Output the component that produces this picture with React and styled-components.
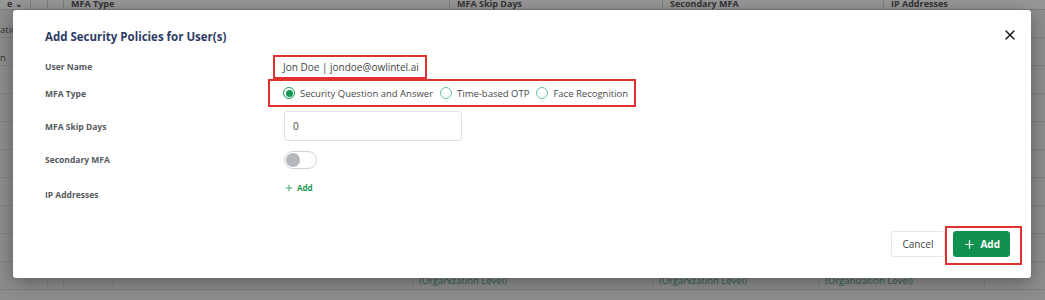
import React, { useState } from "react";
import styled, { createGlobalStyle } from "styled-components";
import { X, Plus } from "lucide-react";

const GlobalStyle = createGlobalStyle`
  body {
    margin: 0;
    font-family: "Open Sans", "Noto Sans", sans-serif;
    background: #8d8d8d;
  }
`;

// ---------- dimmed page behind the dialog ----------

const Page = styled.div`
  position: relative;
  width: 1045px;
  height: 300px;
  overflow: hidden;
  background: #8d8d8d;
`;

const TableHead = styled.div`
  display: grid;
  grid-template-columns: 30px 17px 16px 386px 213px 221px 1fr;
  height: 14px;
  margin-top: -5px;
  background: #979797;
  border-bottom: 1px solid #7c7c7c;
`;

const HeadCell = styled.div`
  font-size: 9px;
  font-weight: 700;
  color: #333;
  padding-left: 7px;
  line-height: 17px;
  white-space: nowrap;
  overflow: hidden;
  border-left: ${p => (p.$line ? "1px solid #7f7f7f" : "none")};
`;

const Body = styled.div`
  display: flex;
  flex-direction: column;
`;

const Row = styled.div`
  display: grid;
  grid-template-columns: 30px 17px 16px 50px 299px 240px 166px 166px 1fr;
  height: 27px;
  border-bottom: 1px solid #7f7f7f;
`;

const Cell = styled.div`
  border-left: ${p => (p.$line ? "1px solid #808080" : "none")};
  font-size: 9.5px;
  color: ${p => (p.$muted ? "#333" : "#2e5d48")};
  padding: ${p => (p.$muted ? "13px 0 0 0" : "12px 0 0 6px")};
  white-space: nowrap;
  overflow: hidden;
`;

// ---------- dialog ----------

const Dialog = styled.div`
  position: absolute;
  top: 10px;
  left: 13px;
  width: 1018px;
  height: 268px;
  background: #fff;
  border-radius: 3px;
  box-shadow: 0 4px 18px rgba(0, 0, 0, 0.35);
  display: flex;
  flex-direction: column;
  box-sizing: border-box;
  padding: 0 9px 13px 32px;
`;

const Header = styled.div`
  display: flex;
  align-items: flex-start;
  justify-content: space-between;
  height: 44px;
  box-sizing: border-box;
  padding-top: 19px;
`;

const Title = styled.h2`
  margin: 0;
  font-size: 11.5px;
  line-height: 16px;
  font-weight: 700;
  color: #2d3b66;
`;

const CloseButton = styled.button`
  border: none;
  background: none;
  padding: 0;
  margin: -2px 4px 0 0;
  display: flex;
  color: #1a1a1a;
  cursor: pointer;
`;

const FieldRow = styled.div`
  display: flex;
  align-items: ${p => p.$align || "center"};
  height: ${p => p.$h}px;
`;

const Label = styled.div`
  width: 239px;
  flex-shrink: 0;
  font-size: 8.5px;
  font-weight: 700;
  color: #555a60;
  margin-top: ${p => p.$mt || 0}px;
`;

const Mark = styled.div`
  display: flex;
  align-items: center;
  box-sizing: border-box;
  border: 2px solid #e0312f;
  height: ${p => p.$h}px;
  margin-left: ${p => p.$ml}px;
  padding: 0 ${p => p.$pr || 6}px 0 ${p => p.$pl}px;
`;

const Value = styled.span`
  font-size: 10px;
  color: #444;
`;

const RadioGroup = styled.div`
  display: flex;
  align-items: center;
  gap: 7px;
`;

const RadioOption = styled.label`
  display: flex;
  align-items: center;
  gap: 5px;
  font-size: 9.5px;
  color: #4a4a4a;
  cursor: pointer;
`;

const RadioCircle = styled.span`
  width: 12px;
  height: 12px;
  box-sizing: border-box;
  border-radius: 50%;
  border: 1.5px solid ${p => (p.$on ? "#189b56" : "#67c596")};
  display: flex;
  align-items: center;
  justify-content: center;
  &::after {
    content: "";
    width: 7px;
    height: 7px;
    border-radius: 50%;
    background: ${p => (p.$on ? "#129850" : "transparent")};
  }
`;

const NumberInput = styled.input`
  width: 178px;
  height: 30px;
  box-sizing: border-box;
  border: 1px solid #dfe1e4;
  border-radius: 3px;
  padding: 0 8px;
  font-family: inherit;
  font-size: 10px;
  color: #444;
  outline: none;
`;

const Switch = styled.button`
  width: 33px;
  height: 18px;
  box-sizing: border-box;
  border: 1px solid #cfd3d9;
  border-radius: 9px;
  background: #fff;
  padding: 1px;
  display: flex;
  align-items: center;
  cursor: pointer;
  &::before {
    content: "";
    width: 14px;
    height: 14px;
    border-radius: 50%;
    background: #b3b7be;
  }
`;

const LinkButton = styled.button`
  border: none;
  background: none;
  padding: 0;
  margin-top: 8px;
  display: flex;
  align-items: center;
  gap: 3px;
  font-family: inherit;
  font-size: 8px;
  font-weight: 700;
  color: #1f9a56;
  cursor: pointer;
`;

const Footer = styled.div`
  margin-top: auto;
  display: flex;
  justify-content: flex-end;
  align-items: flex-start;
`;

const Button = styled.button`
  height: 26px;
  box-sizing: border-box;
  border-radius: 3px;
  font-family: inherit;
  font-size: 10px;
  display: flex;
  align-items: center;
  gap: 4px;
  cursor: pointer;
  border: 1px solid ${p => (p.$primary ? "#119150" : "#e4e6e8")};
  background: ${p => (p.$primary ? "#119150" : "#fff")};
  color: ${p => (p.$primary ? "#fff" : "#444")};
  font-weight: ${p => (p.$primary ? 700 : 400)};
  padding: 0 ${p => (p.$primary ? 9 : 11)}px;
  margin-top: ${p => (p.$primary ? 0 : 5)}px;
`;

const ActionMark = styled.div`
  border: 2px solid #e0312f;
  padding: 3px 10px 6px 6px;
`;

const options = ["Security Question and Answer", "Time-based OTP", "Face Recognition"];

export default function App() {
  const [mfa, setMfa] = useState(options[0]);
  const [days, setDays] = useState("0");

  const rows = Array.from({ length: 10 });

  return (
    <Page>
      <GlobalStyle />
      <TableHead>
        <HeadCell>e ⌄</HeadCell>
        <HeadCell $line />
        <HeadCell $line />
        <HeadCell $line>MFA Type</HeadCell>
        <HeadCell $line>MFA Skip Days</HeadCell>
        <HeadCell $line>Secondary MFA</HeadCell>
        <HeadCell $line>IP Addresses</HeadCell>
      </TableHead>
      <Body>
        {rows.map((_, i) => (
          <Row key={i}>
            <Cell $muted>{i === 0 ? "atio" : i === 1 ? "n" : ""}</Cell>
            <Cell $line />
            <Cell $line />
            <Cell $line />
            <Cell $line />
            <Cell $line>{i === 9 ? "(Organization Level)" : ""}</Cell>
            <Cell $line>{i === 9 ? "(Organization Level)" : ""}</Cell>
            <Cell $line>{i === 9 ? "(Organization Level)" : ""}</Cell>
            <Cell $line />
          </Row>
        ))}
      </Body>

      <Dialog role="dialog">
        <Header>
          <Title>Add Security Policies for User(s)</Title>
          <CloseButton aria-label="Close">
            <X size={16} strokeWidth={2.2} />
          </CloseButton>
        </Header>

        <FieldRow $h={25}>
          <Label>User Name</Label>
          <Mark $h={24} $ml={-11} $pl={8}>
            <Value>Jon Doe | jondoe@owlintel.ai</Value>
          </Mark>
        </FieldRow>

        <FieldRow $h={28}>
          <Label>MFA Type</Label>
          <Mark $h={28} $ml={-16} $pl={13} $pr={6}>
            <RadioGroup>
              {options.map(o => (
                <RadioOption key={o} onClick={() => setMfa(o)}>
                  <RadioCircle $on={mfa === o} />
                  {o}
                </RadioOption>
              ))}
            </RadioGroup>
          </Mark>
        </FieldRow>

        <FieldRow $h={38}>
          <Label>MFA Skip Days</Label>
          <NumberInput value={days} onChange={e => setDays(e.target.value)} />
        </FieldRow>

        <FieldRow $h={29}>
          <Label>Secondary MFA</Label>
          <Switch aria-label="Secondary MFA" />
        </FieldRow>

        <FieldRow $h={36} $align="flex-start">
          <Label $mt={15}>IP Addresses</Label>
          <LinkButton>
            <Plus size={10} strokeWidth={2} />
            Add
          </LinkButton>
        </FieldRow>

        <Footer>
          <Button>Cancel</Button>
          <ActionMark>
            <Button $primary>
              <Plus size={13} strokeWidth={2.2} />
              Add
            </Button>
          </ActionMark>
        </Footer>
      </Dialog>
    </Page>
  );
}
